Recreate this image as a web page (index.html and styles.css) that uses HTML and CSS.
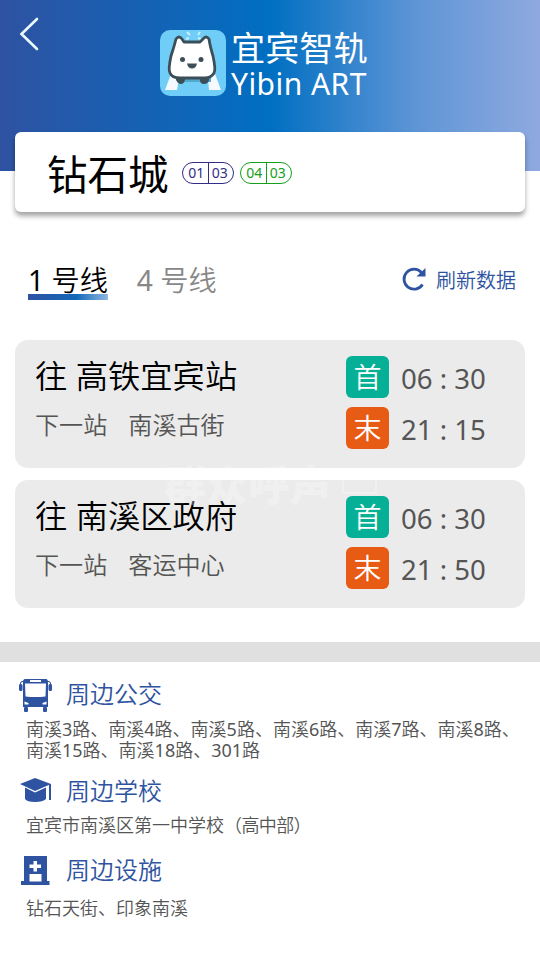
FILE: index.html
```html
<!DOCTYPE html>
<html lang="zh-CN">
<head>
<meta charset="utf-8">
<title>宜宾智轨</title>
<link rel="stylesheet" href="styles.css">
</head>
<body>
<header class="hero">
  <svg class="back" width="22" height="36" viewBox="0 0 22 36"><path d="M19 3 3.500 18 19 33" fill="none" stroke="#eafaff" stroke-width="2.6" stroke-linecap="round"/></svg>
  <svg class="logo" width="66" height="67" viewBox="0 0 66 67">
    <rect width="66" height="66" rx="10" fill="#70cdf8"/>
    <path d="M11 44 19 49 17 60H5ZM48 49 55 44 61 60H49Z" fill="#f4faff"/>
    <path d="M27 2 30 5M26 9 29 8M38 5 40 2M38 8 41 9" stroke="#c8f0ff" stroke-width="2"/>
    <path d="M17 48h34v4H17Z" fill="#51a9cc"/>
    <path d="M16 47h9v3q-1 4-4 4t-5-4ZM40 47h9v3q-1 4-5 4t-4-4Z" fill="#3c4e58"/>
    <path d="M16 9Q19 5 22 9L24 12H40L43 9Q46 5 49 9Q50 16 53 26Q56 40 54 43Q51 48 45 48H20Q12 48 10 43Q8 40 11 26Q14 17 16 9Z" fill="#fff" stroke="#3c4e58" stroke-width="2.8" stroke-linejoin="round"/>
    <circle cx="22.500" cy="29.500" r="2.500" fill="#3c4e58"/><circle cx="41" cy="29.500" r="2.500" fill="#3c4e58"/>
    <path d="M27 33.500H37Q36 38.500 32 38.500T27 33.500" fill="#3c4e58"/>
  </svg>
  <div class="brand"><div class="brand-cn">宜宾智轨</div><div class="brand-en">Yibin ART</div></div>
</header>
<section class="station">
  <h1>钻石城</h1>
  <div class="code blue"><span>01</span><span>03</span></div>
  <div class="code green"><span>04</span><span>03</span></div>
</section>
<nav class="tabs">
  <div class="tab active"><b>1</b> 号线</div>
  <div class="tab"><b>4</b> 号线</div>
  <div class="refresh">
    <svg width="26" height="26" viewBox="0 0 26 26"><path d="M20.500 6.500A10 10 0 1 0 21.500 18.500" fill="none" stroke="#2e53a1" stroke-width="2.800"/><path d="M24.500 2V10.500H15.500Z" fill="#2e53a1"/></svg>
    <span>刷新数据</span>
  </div>
</nav>
<main class="routes">
  <article class="route">
    <div class="dest"><h2>往 高铁宜宾站</h2><p><span>下一站</span><span>南溪古街</span></p></div>
    <div class="times">
      <div class="time"><b class="first">首</b><span>06 : 30</span></div>
      <div class="time"><b class="last">末</b><span>21 : 15</span></div>
    </div>
  </article>
  <article class="route">
    <div class="dest"><h2>往 南溪区政府</h2><p><span>下一站</span><span>客运中心</span></p></div>
    <div class="times">
      <div class="time"><b class="first">首</b><span>06 : 30</span></div>
      <div class="time"><b class="last">末</b><span>21 : 50</span></div>
    </div>
  </article>
  <div class="watermark"><span>群众呼声</span><i></i></div>
</main>
<div class="divider"></div>
<section class="nearby">
  <div class="group bus">
    <h3><svg width="34" height="34" viewBox="0 0 34 34"><g fill="#2e53a1"><path d="M6 0H27Q29 0 29 4V28H4V4Q4 0 6 0Z"/><rect x="0" y="5" width="3.500" height="7" rx="1.500"/><rect x="29.500" y="5" width="3.500" height="7" rx="1.500"/><path d="M1 6Q1 2 5 2M32 6Q32 2 28 2" fill="none" stroke="#2e53a1"/><rect x="5" y="28" width="4" height="5" rx="1"/><rect x="24" y="28" width="4" height="5" rx="1"/></g><rect x="11" y="1" width="11" height="2" fill="#fff"/><path d="M6 4.500H27L26.500 17.500Q16 18.500 6.500 17.500Z" fill="#fff"/><path d="M5.500 22.500 9.500 24V25.500H5.500ZM27.500 22.500 23.500 24V25.500H27.500Z" fill="#fff"/></svg><span>周边公交</span></h3>
    <p>南溪<b>3</b>路、南溪<b>4</b>路、南溪<b>5</b>路、南溪<b>6</b>路、南溪<b>7</b>路、南溪<b>8</b>路、<br>南溪<b>15</b>路、南溪<b>18</b>路、<b>301</b>路</p>
  </div>
  <div class="group school">
    <h3><svg width="34" height="34" viewBox="0 0 34 34"><g fill="#2e53a1"><path d="M1 10 16 4 32 10 16 17Z"/><path d="M6 13.500 16 18.500 27 13.500V25Q24 28 16 28T6 25Z"/><path d="M30 10h2V26h-2Z"/></g></svg><span>周边学校</span></h3>
    <p>宜宾市南溪区第一中学校<span class="paren">（高中部）</span></p>
  </div>
  <div class="group place">
    <h3><svg width="34" height="34" viewBox="0 0 34 34"><path d="M5 3H28V28H30.500V32H2V28H5Z" fill="#2e53a1"/><path d="M14.500 8h3.500v3.500h4v3.500h-4v3.500h-3.500V15h-4v-3.500h4ZM10.500 21H22.500V28.500H10.500Z" fill="#fff"/></svg><span>周边设施</span></h3>
    <p>钻石天街、印象南溪</p>
  </div>
</section>
</body>
</html>
```
FILE: styles.css
```css
* { box-sizing: border-box; }
body { margin: 0; width: 540px; height: 960px; overflow: hidden; background: #fff; color: #000; font-family: "Noto Sans", "Noto Sans CJK SC", sans-serif; font-weight: 350; }
h1, h2, h3, p { margin: 0; font-weight: 350; white-space: nowrap; }
svg { display: block; flex: none; }
.hero { height: 171px; display: flex; align-items: flex-start; padding: 30px 0 0 18px; color: #fff; background: linear-gradient(90deg, #2f52a2 0, #006fc2 50%, #5e95d6 77%, #8fa9df 100%); }
.back { margin-top: -14px; }
.logo { margin-left: 120px; }
.brand { margin-left: 5px; white-space: nowrap; font-weight: 400; }
.brand-cn { font-size: 34.2px; line-height: 36px; }
.brand-en { font-size: 30px; line-height: 36px; letter-spacing: .45px; }
.station { position: relative; height: 80px; margin: -39px 15px 0; padding: 0 33px; display: flex; align-items: center; background: #fff; border-radius: 6px; box-shadow: 0 4px 5px rgba(0,0,0,.36); }
.station h1 { font-size: 40.5px; line-height: 60px; width: 120px; font-weight: 400; margin: 5px 15px 0 -1px; }
.code { display: flex; width: 52px; height: 22px; border: 1.5px solid; border-radius: 11px; margin: 2px 6px 0 0; font-size: 14px; line-height: 19px; font-weight: 400; }
.code span { flex: 1; text-align: center; padding-left: 2px; }
.code span + span { border-left: 1.5px solid; padding: 0 2px 0 0; }
.blue { color: #332d88; }
.green { color: #14a01c; }
.tabs { height: 128px; padding: 46px 24px 0 28px; display: flex; align-items: flex-start; }
.tab { font-size: 28.2px; line-height: 44px; height: 42px; white-space: nowrap; margin-right: 29px; color: #888; }
.tab b, .group b { font-weight: 400; }
.tab.active { color: #000; background: linear-gradient(90deg, #2f52a2, #1267b9 60%, #8fb8e0) bottom / 100% 6px no-repeat; }
.refresh { margin-left: auto; display: flex; align-items: center; gap: 9px; height: 42px; color: #2e53a1; font-size: 20px; white-space: nowrap; }
.routes { position: relative; display: grid; gap: 12px; padding: 0 15px; }
.route { height: 128px; border-radius: 13px; background: #ebebeb; display: flex; justify-content: space-between; padding: 16px 0 0 20px; }
.dest h2 { font-size: 32.3px; line-height: 38px; font-weight: 350; }
.dest p { display: flex; gap: 21px; margin-top: 15px; font-size: 24.1px; line-height: 32px; color: #555; }
.times { width: 179px; display: grid; gap: 9px; align-content: start; }
.time { display: flex; gap: 12px; height: 42px; align-items: center; color: #555; font-size: 27.6px; font-weight: 400; white-space: nowrap; }
.time span { padding-top: 1px; }
.time b { width: 43px; height: 42px; border-radius: 6px; color: #fff; text-align: center; font-size: 28px; line-height: 42px; font-weight: 350; }
.first { background: #06b096; }
.last { background: #e75b15; }
.watermark { position: absolute; left: 164px; top: 124px; display: flex; align-items: center; gap: 10px; color: rgba(255,255,255,.3); font-size: 42px; line-height: 42px; font-weight: 900; }
.watermark i { width: 35px; height: 18px; border: 2px solid rgba(255,255,255,.25); }
.divider { height: 20px; margin-top: 34px; background: #e0e0e0; }
.nearby { padding: 17px 0 0 19px; }
.group h3 { display: flex; align-items: center; gap: 13px; height: 34px; line-height: 34px; font-size: 24px; color: #2e53a1; }
.group p { padding-left: 7px; font-size: 18px; line-height: 21px; color: #555; }
.bus { height: 95px; }
.bus h3 span { padding-bottom: 5px; }
.bus p { margin-top: 6px; }
.school { height: 79px; }
.school p { margin-top: 7px; }
.paren { letter-spacing: -.6px; }
.place p { margin-top: 11px; }
```
